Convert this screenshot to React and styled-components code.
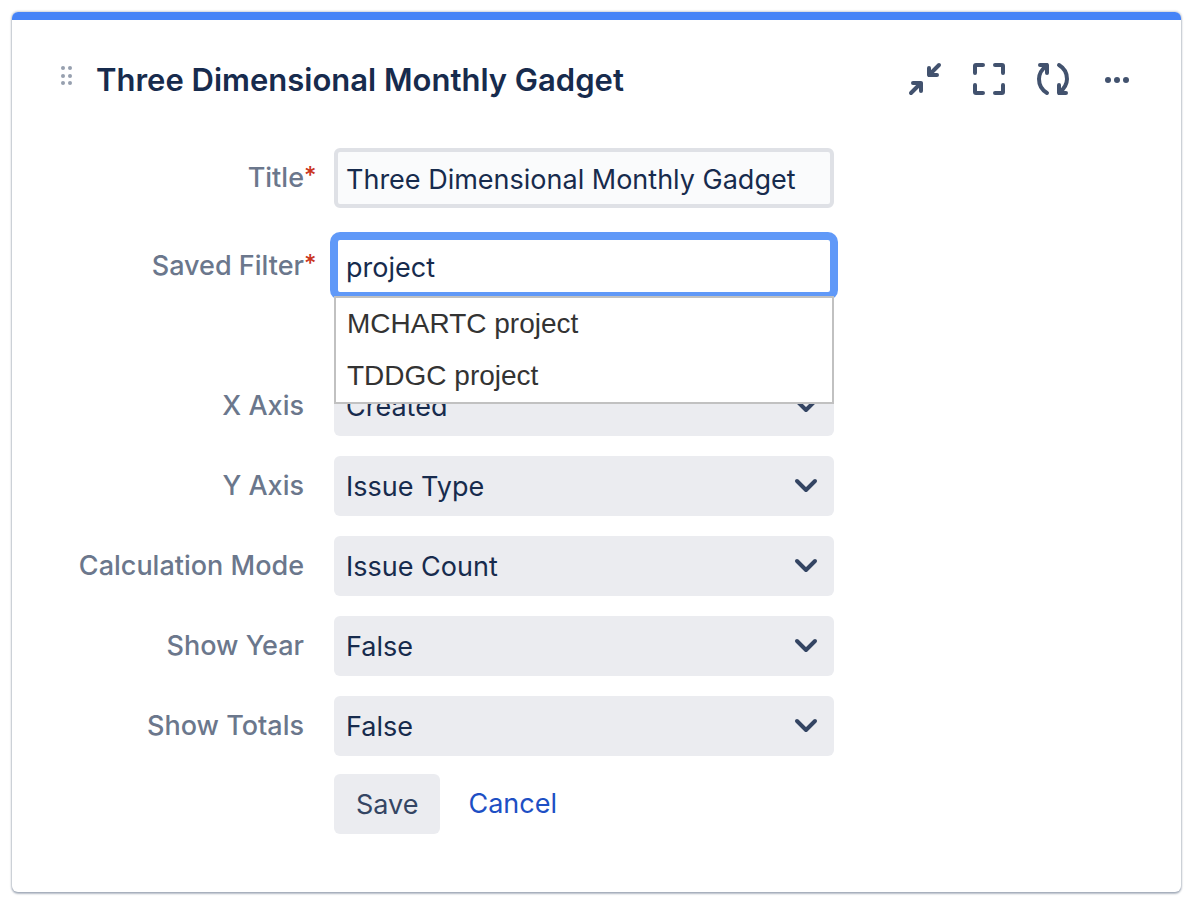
import React, { useState } from 'react';
import styled, { createGlobalStyle, css } from 'styled-components';

const GlobalStyle = createGlobalStyle`
  * {
    box-sizing: border-box;
  }
  body {
    margin: 0;
    background: #fff;
    color: #172b4d;
    font-family: Inter, 'Liberation Sans', sans-serif;
    font-size: 27px;
  }
`;

const Card = styled.section`
  margin: 12px;
  background: #fff;
  border-radius: 6px;
  overflow: hidden;
  box-shadow: 0 2px 2px rgba(9, 30, 66, 0.25), 0 0 2px 1px rgba(9, 30, 66, 0.2);
`;

const ColorBar = styled.div`
  height: 8px;
  background: #4583f7;
`;

const Header = styled.header`
  display: flex;
  align-items: center;
  padding: 36px 40px 0 44px;
`;

const Handle = styled.svg`
  width: 24px;
  height: 48px;
  margin-right: 16px;
  fill: #97a0af;
  flex: none;
`;

const Heading = styled.h1`
  flex: 1;
  margin: 0;
  font-size: 31px;
  font-weight: 600;
  line-height: 48px;
  white-space: nowrap;
`;

const Actions = styled.div`
  display: flex;
  gap: 16px;
`;

const IconButton = styled.button`
  width: 48px;
  height: 48px;
  padding: 0;
  border: 0;
  background: none;
  color: #42526e;
  cursor: pointer;

  svg {
    display: block;
    fill: none;
    stroke: currentColor;
    stroke-width: 4;
    stroke-linecap: round;
    stroke-linejoin: round;
  }
`;

const Form = styled.form`
  display: flex;
  flex-direction: column;
  gap: 20px;
  padding: 44px 12px 58px 0;
`;

const Row = styled.div`
  display: grid;
  grid-template-columns: 292px minmax(0, 500px);
  column-gap: 30px;
  ${(props) =>
    props.$after &&
    css`
      margin-bottom: ${props.$after}px;
    `}
`;

const Label = styled.label`
  position: relative;
  justify-self: end;
  line-height: 60px;
  font-weight: 500;
  color: #6b778c;
`;

const Required = styled.span`
  position: absolute;
  left: 100%;
  top: 0;
  font-size: 24px;
  line-height: 56px;
  color: #ca3521;
`;

const Field = styled.div`
  position: relative;
`;

const TextInput = styled.input`
  display: block;
  width: 100%;
  height: 60px;
  padding: 2px 8px 0;
  border: 4px solid #dfe1e6;
  border-radius: 6px;
  outline: none;
  background: #fafbfc;
  color: #172b4d;
  font: inherit;
  ${(props) =>
    props.$active &&
    css`
      border-color: #6099f8;
      background: #fff;
      box-shadow: 0 0 0 4px #6099f8;
    `}
`;

const Select = styled.select`
  display: block;
  width: 100%;
  height: 60px;
  padding: 0 60px 0 12px;
  border: 0;
  border-radius: 6px;
  appearance: none;
  background: #ebecf0;
  color: #172b4d;
  font: inherit;
`;

const Chevron = styled.svg`
  position: absolute;
  top: 18px;
  right: 16px;
  width: 24px;
  height: 24px;
  fill: none;
  stroke: #344563;
  stroke-width: 4;
  stroke-linecap: round;
  stroke-linejoin: round;
  pointer-events: none;
`;

const Suggestions = styled.ul`
  position: absolute;
  z-index: 1;
  top: 100%;
  left: 0;
  right: 0;
  margin: 0;
  padding: 0;
  border: 2px solid #c1c1c1;
  background: #fff;
  list-style: none;
  font-family: 'Liberation Sans', Arial, sans-serif;
  font-size: 28px;
  color: #333;
`;

const Suggestion = styled.li`
  padding: 0 11px;
  line-height: 52px;
  cursor: pointer;
`;

const Buttons = styled.div`
  display: flex;
  gap: 28px;
  padding-left: 322px;
`;

const SaveButton = styled.button`
  height: 60px;
  padding: 0 22px;
  border: 0;
  border-radius: 6px;
  background: #ebecf0;
  color: #344563;
  font: inherit;
  cursor: pointer;
`;

const CancelLink = styled.a`
  line-height: 60px;
  color: #1d4fc4;
  text-decoration: none;
`;

const FieldRows = styled.div`
  display: flex;
  flex-direction: column;
  gap: 20px;
  margin-bottom: -2px;
`;

const icons = [
  {
    name: 'Minimize',
    draw: <path d="M38 9L28 19M28 12V19H36M10 37L20 27M12 27H20V35" />,
  },
  {
    name: 'Maximize',
    draw: (
      <path d="M10 17V10Q10 9 11 9H18M30 9H37Q38 9 38 10V17M38 29V36Q38 37 37 37H30M18 37H11Q10 37 10 36V29" />
    ),
  },
  {
    name: 'Refresh',
    draw: (
      <path d="M11 9H18V17M18 9C13 13 10 17 10 23C10 29 13 34 18 37M37 37H30V29M30 37C35 33 38 29 38 23C38 17 35 12 30 9" />
    ),
  },
  {
    name: 'More',
    draw: (
      <g fill="currentColor" stroke="none">
        <circle cx="15" cy="24" r="3" />
        <circle cx="24" cy="24" r="3" />
        <circle cx="33" cy="24" r="3" />
      </g>
    ),
  },
];

const selects = [
  { id: 'x-axis', label: 'X Axis', options: ['Created', 'Updated', 'Resolved'] },
  { id: 'y-axis', label: 'Y Axis', options: ['Issue Type', 'Status', 'Priority'] },
  { id: 'mode', label: 'Calculation Mode', options: ['Issue Count'] },
  { id: 'show-year', label: 'Show Year', options: ['False', 'True'] },
  { id: 'show-totals', label: 'Show Totals', options: ['False', 'True'] },
];

const SelectRow = ({ id, label, options }) => (
  <Row>
    <Label htmlFor={id}>{label}</Label>
    <Field>
      <Select id={id}>
        {options.map((option) => (
          <option key={option}>{option}</option>
        ))}
      </Select>
      <Chevron viewBox="0 0 24 24">
        <path d="M3 7L12 16L21 7" />
      </Chevron>
    </Field>
  </Row>
);

const App = () => {
  const [title, setTitle] = useState('Three Dimensional Monthly Gadget');
  const [filter, setFilter] = useState('project');

  return (
    <>
      <GlobalStyle />
      <Card>
        <ColorBar />
        <Header>
          <Handle viewBox="0 0 24 48">
            {[12, 20, 27].map((y) => (
              <React.Fragment key={y}>
                <circle cx="7" cy={y} r="2" />
                <circle cx="14" cy={y} r="2" />
              </React.Fragment>
            ))}
          </Handle>
          <Heading>Three Dimensional Monthly Gadget</Heading>
          <Actions>
            {icons.map(({ name, draw }) => (
              <IconButton key={name} type="button" aria-label={name}>
                <svg width="48" height="48" viewBox="0 0 48 48">
                  {draw}
                </svg>
              </IconButton>
            ))}
          </Actions>
        </Header>
        <Form onSubmit={(e) => e.preventDefault()}>
          <FieldRows>
            <Row $after={8}>
              <Label htmlFor="title">
                Title<Required>*</Required>
              </Label>
              <Field>
                <TextInput
                  id="title"
                  value={title}
                  onChange={(e) => setTitle(e.target.value)}
                />
              </Field>
            </Row>
            <Row $after={60}>
              <Label htmlFor="filter">
                Saved Filter<Required>*</Required>
              </Label>
              <Field>
                <TextInput
                  id="filter"
                  $active
                  autoComplete="off"
                  value={filter}
                  onChange={(e) => setFilter(e.target.value)}
                />
                <Suggestions>
                  {['MCHARTC project', 'TDDGC project'].map((name) => (
                    <Suggestion key={name} onClick={() => setFilter(name)}>
                      {name}
                    </Suggestion>
                  ))}
                </Suggestions>
              </Field>
            </Row>
            {selects.map((item) => (
              <SelectRow key={item.id} {...item} />
            ))}
          </FieldRows>
          <Buttons>
            <SaveButton type="submit">Save</SaveButton>
            <CancelLink href="#cancel">Cancel</CancelLink>
          </Buttons>
        </Form>
      </Card>
    </>
  );
};

export default App;
